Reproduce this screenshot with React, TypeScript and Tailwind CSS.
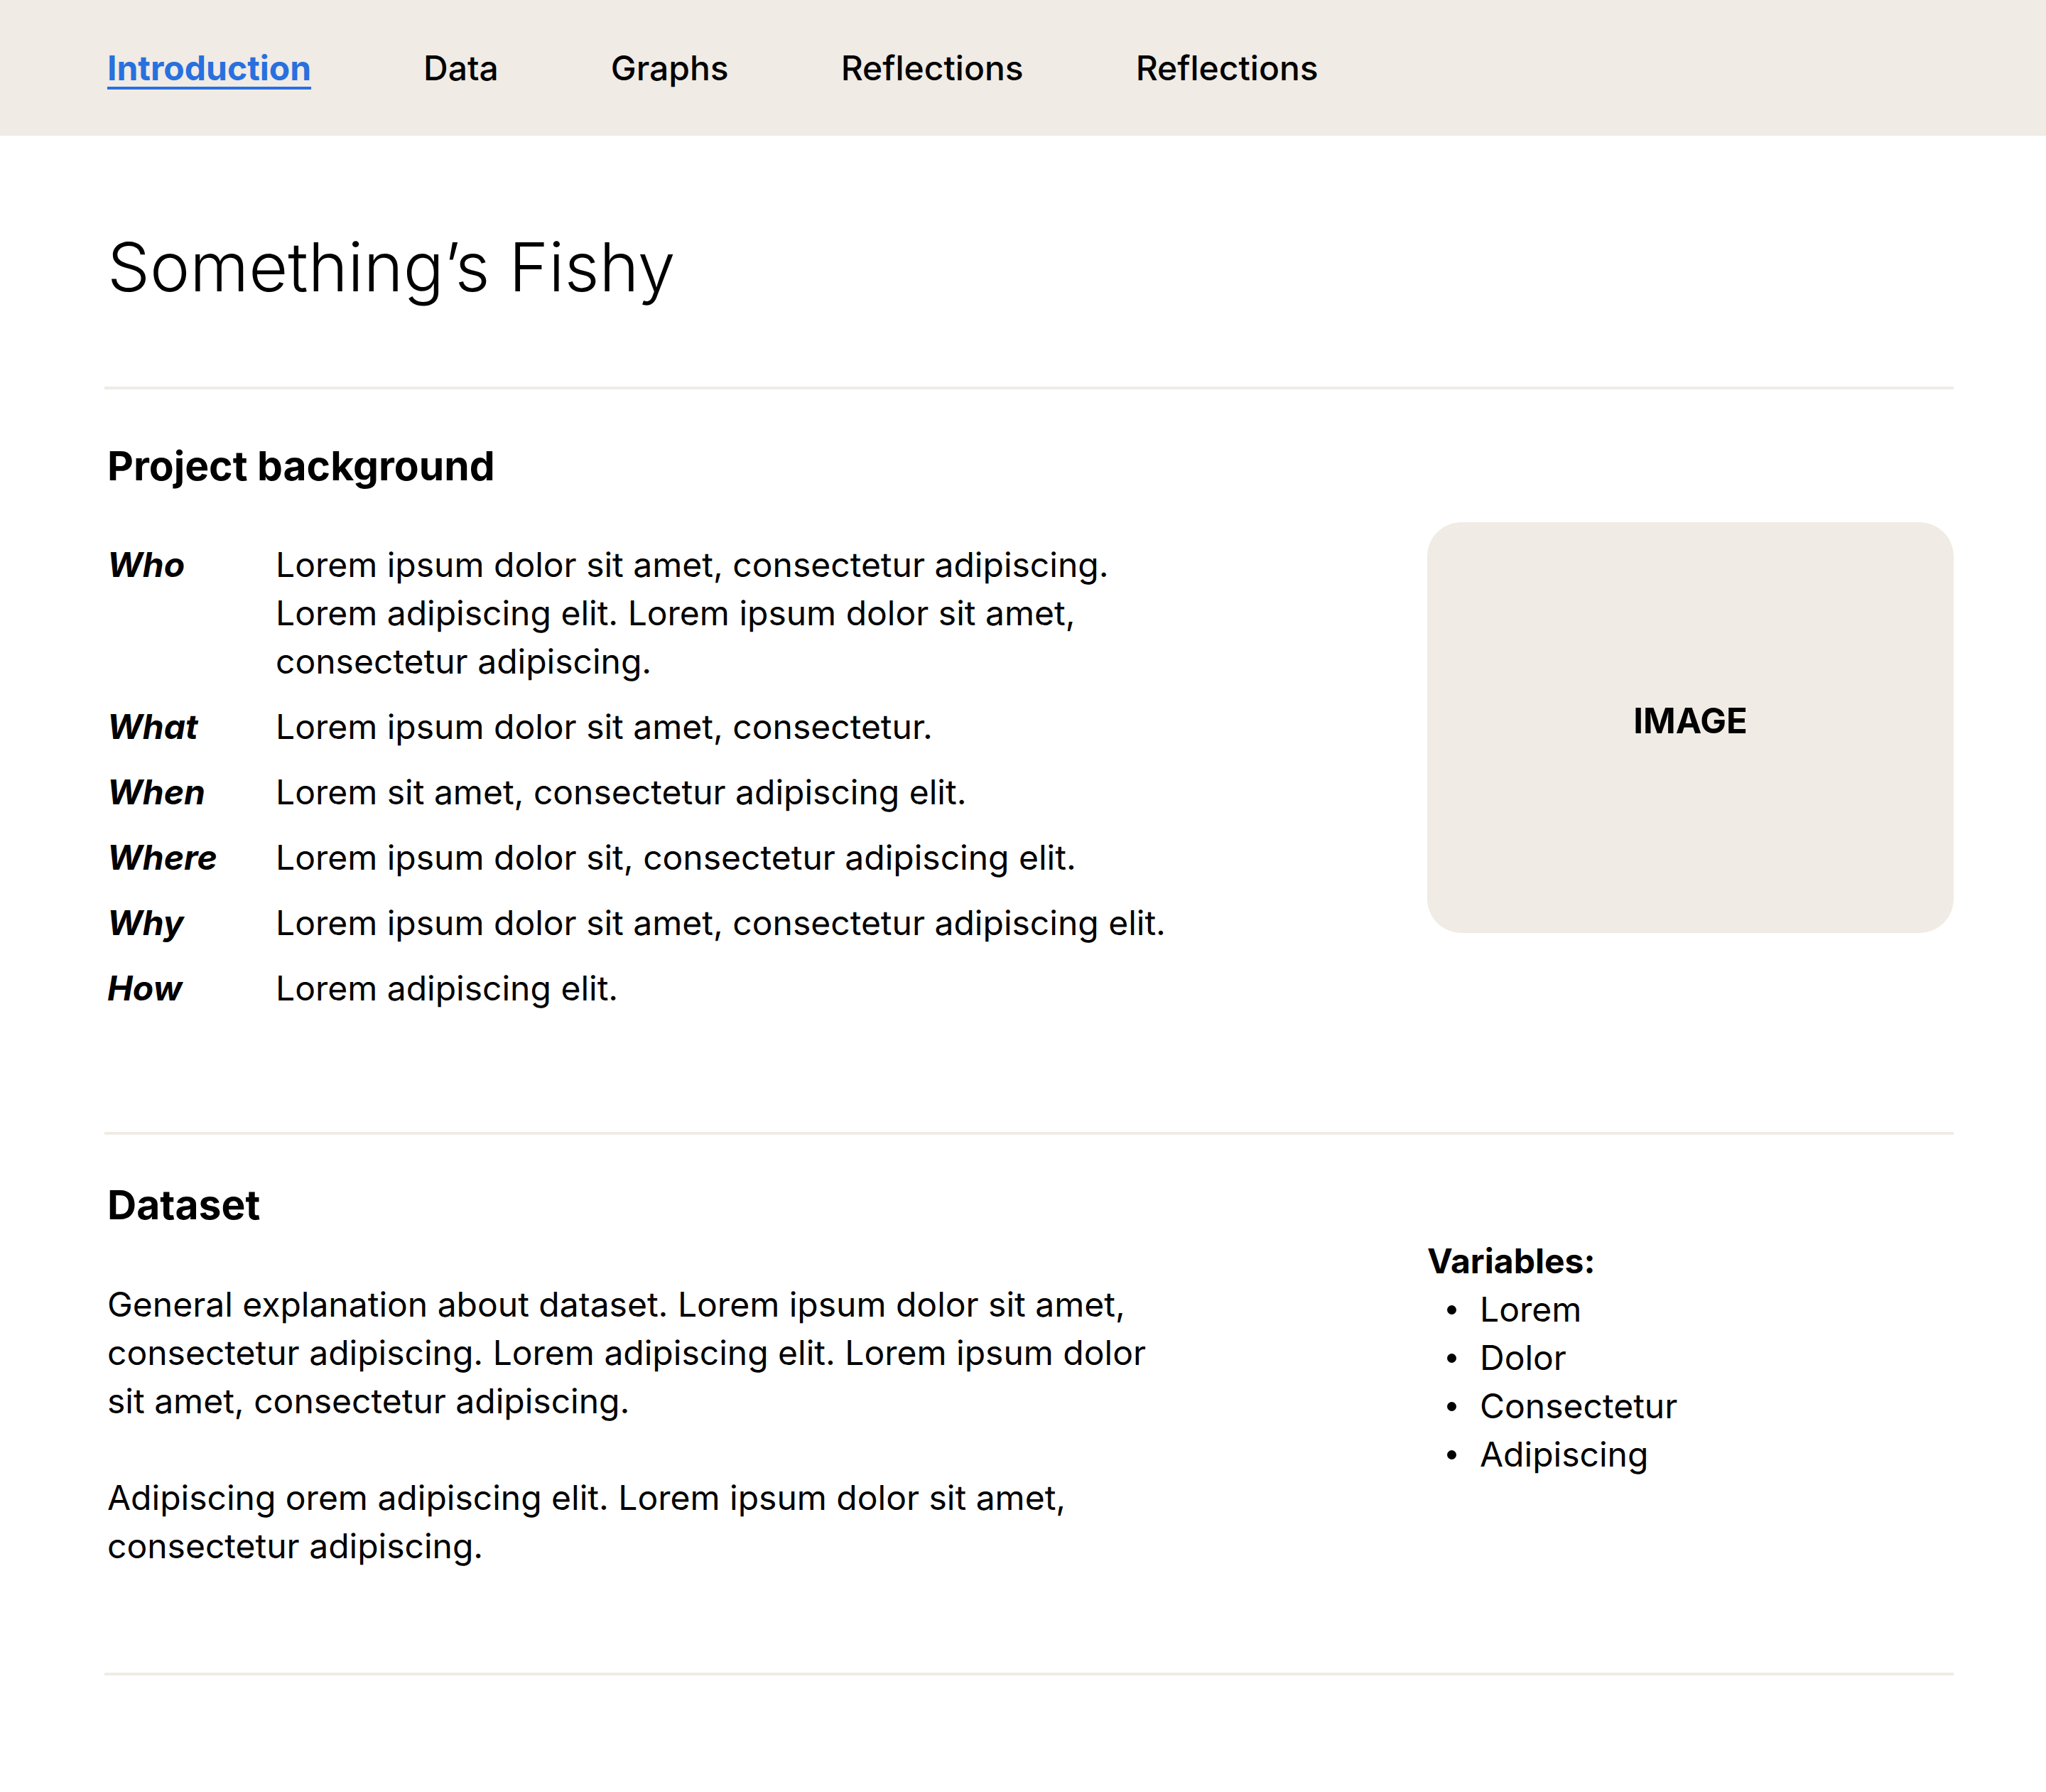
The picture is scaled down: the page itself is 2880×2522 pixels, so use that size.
import { type ReactNode } from "react";

const navItems = ["Introduction", "Data", "Graphs", "Reflections", "Reflections"];

const background: ReadonlyArray<Readonly<{ label: string; text: string }>> = [
  {
    label: "Who",
    text: "Lorem ipsum dolor sit amet, consectetur adipiscing. Lorem adipiscing elit. Lorem ipsum dolor sit amet, consectetur adipiscing.",
  },
  { label: "What", text: "Lorem ipsum dolor sit amet, consectetur." },
  { label: "When", text: "Lorem sit amet, consectetur adipiscing elit." },
  { label: "Where", text: "Lorem ipsum dolor sit, consectetur adipiscing elit." },
  { label: "Why", text: "Lorem ipsum dolor sit amet, consectetur adipiscing elit." },
  { label: "How", text: "Lorem adipiscing elit." },
];

const variables = ["Lorem", "Dolor", "Consectetur", "Adipiscing"];

// the dividers run a few pixels further left than the text column
const Rule = () => <div className="-ml-[4px] h-[4px] w-[calc(100%+4px)] bg-[#f0ebe5]" />;

const SectionTitle = ({ children }: Readonly<{ children: ReactNode }>) => (
  <h2 className="text-[57px] leading-[68px] font-bold text-black">{children}</h2>
);

export default function App() {
  return (
    <div className="min-h-screen bg-white font-['Inter',sans-serif] text-black">
      <nav className="flex h-[191px] items-center gap-[158px] bg-[#f0ebe5] pl-[151px]">
        {navItems.map((item, index) =>
          index === 0 ? (
            <a
              key={index}
              className="text-[48px] leading-none font-bold text-[#2870de] underline decoration-[4px] underline-offset-[9px]"
              href="#"
            >
              {item}
            </a>
          ) : (
            <a key={index} className="text-[48px] leading-none font-medium text-black" href="#">
              {item}
            </a>
          ),
        )}
      </nav>

      <main className="pr-[130px] pl-[151px]">
        <h1 className="pt-[127px] text-[95px] leading-[116px] font-light">Something’s Fishy</h1>
        <div className="mt-[110px]">
          <Rule />
        </div>

        <section className="pt-[74px] pb-[168px]">
          <SectionTitle>Project background</SectionTitle>
          <div className="mt-[45px] flex items-start justify-between">
            <div className="grid w-[1506px] grid-cols-[237px_1fr] gap-y-[24px] pt-[26px] text-[48px] leading-[68px]">
              {background.map((row) => (
                <div key={row.label} className="contents">
                  <div className="font-bold italic">{row.label}</div>
                  <div>{row.text}</div>
                </div>
              ))}
            </div>
            <div className="flex h-[578px] w-[741px] items-center justify-center rounded-[48px] bg-[#f0ebe5] pb-[18px]">
              <span className="text-[49px] font-bold">IMAGE</span>
            </div>
          </div>
        </section>
        <Rule />

        <section className="pt-[65px] pb-[144px]">
          <SectionTitle>Dataset</SectionTitle>
          <div className="mt-[11px] flex items-start justify-between text-[48px] leading-[68px]">
            <div className="grid w-[1506px] gap-[68px] pt-[61px]">
              <p>
                General explanation about dataset. Lorem ipsum dolor sit amet, consectetur adipiscing. Lorem
                adipiscing elit. Lorem ipsum dolor sit amet, consectetur adipiscing.
              </p>
              <p>Adipiscing orem adipiscing elit. Lorem ipsum dolor sit amet, consectetur adipiscing.</p>
            </div>
            <div className="w-[741px]">
              <div className="font-bold">Variables:</div>
              <ul>
                {variables.map((item) => (
                  <li key={item} className="flex items-center">
                    <span className="ml-[28px] h-[13px] w-[13px] rounded-full bg-black" />
                    <span className="ml-[33px]">{item}</span>
                  </li>
                ))}
              </ul>
            </div>
          </div>
        </section>
        <Rule />
      </main>
    </div>
  );
}
